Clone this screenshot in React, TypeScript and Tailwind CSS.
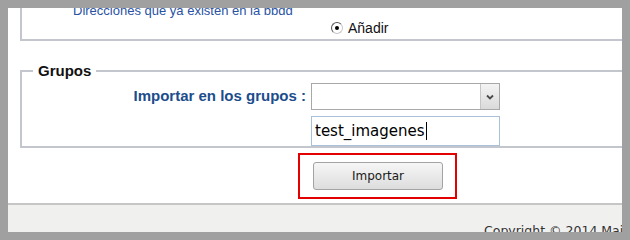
import React from 'react';

const RadioDot = () => (
  <span className="w-[12px] h-[12px] rounded-full border border-[#555] border-r-[#c8c8c8] border-b-[#c8c8c8] bg-white flex items-center justify-center">
    <span className="w-[4px] h-[4px] rounded-full bg-black"></span>
  </span>
);

const App: React.FC = () => {
  return (
    <div className="w-[630px] h-[240px] bg-[#a0a0a0] p-[8px] font-['Liberation_Sans',Arial,sans-serif]">
      <div className="w-full h-full bg-white overflow-hidden flex flex-col">
        {/* scrolled content */}
        <div className="flex-1 overflow-hidden">
          {/* Top fieldset (top edge scrolled out) */}
          <div className="ml-[12px] w-[640px] border-l-2 border-r-2 border-b-2 border-[#c3c6cc] h-[38px]">
            <div className="mt-[-5px] pl-[51px] text-[13px] leading-[15px] text-[#2952a3]">
              Direcciones que ya existen en la bbdd
            </div>
            <div className="mt-[2px] ml-[309px] flex items-center gap-[5px] text-[14px] leading-[16px] text-[#111]">
              <RadioDot />
              <span>Añadir</span>
            </div>
          </div>

          {/* Grupos */}
          <fieldset className="mt-[21px] ml-[12px] w-[640px] border-2 border-[#c3c6cc]">
            <legend className="ml-[11px] px-[5px] text-[15px] leading-[17px] font-bold text-[#111]">Grupos</legend>
            <div className="pt-[4px] grid grid-cols-[284px_189px] gap-x-[5px] gap-y-[6px] items-center">
              <div className="text-right text-[15px] font-bold text-[#1c4d8c]">Importar en los grupos :</div>
              <div className="h-[27px] border border-[#a8a8a8] flex bg-white">
                <div className="flex-1"></div>
                <div className="w-[19px] border-l border-[#c6c6c6] bg-gradient-to-b from-[#f4f4f4] to-[#dadada] flex items-center justify-center">
                  <svg width="8" height="6" viewBox="0 0 8 6">
                    <polyline points="1,1.5 4,4.5 7,1.5" fill="none" stroke="#4a4a4a" strokeWidth="1.8" />
                  </svg>
                </div>
              </div>
              <div></div>
              <div className="h-[30px] border border-[#a9c0d9] flex items-center pl-[3px] font-['DejaVu_Sans',sans-serif] text-[15px] text-black">
                <span>test_imagenes</span>
                <span className="w-px h-[18px] bg-black ml-[1px]"></span>
              </div>
            </div>
          </fieldset>

          {/* Import button */}
          <div className="mt-[5px] ml-[290px] w-[159px] h-[46px] border-2 border-[#e30000] flex items-center pl-[13px]">
            <button className="w-[130px] h-[28px] rounded-[3px] border border-[#a3a3a3] bg-gradient-to-b from-[#f6f6f6] to-[#dddddd] font-['DejaVu_Sans',sans-serif] text-[12px] text-[#1a1a1a]">
              Importar
            </button>
          </div>
        </div>

        {/* footer */}
        <div className="h-[29px] border-t-2 border-[#c6c6c6] bg-[#f0f0ef] pt-[18px] pl-[476px] whitespace-nowrap font-['DejaVu_Sans',sans-serif] text-[12.5px] leading-[15px] text-[#333]">
          Copyright © 2014 Mailing
        </div>
      </div>
    </div>
  );
};

export default App;
